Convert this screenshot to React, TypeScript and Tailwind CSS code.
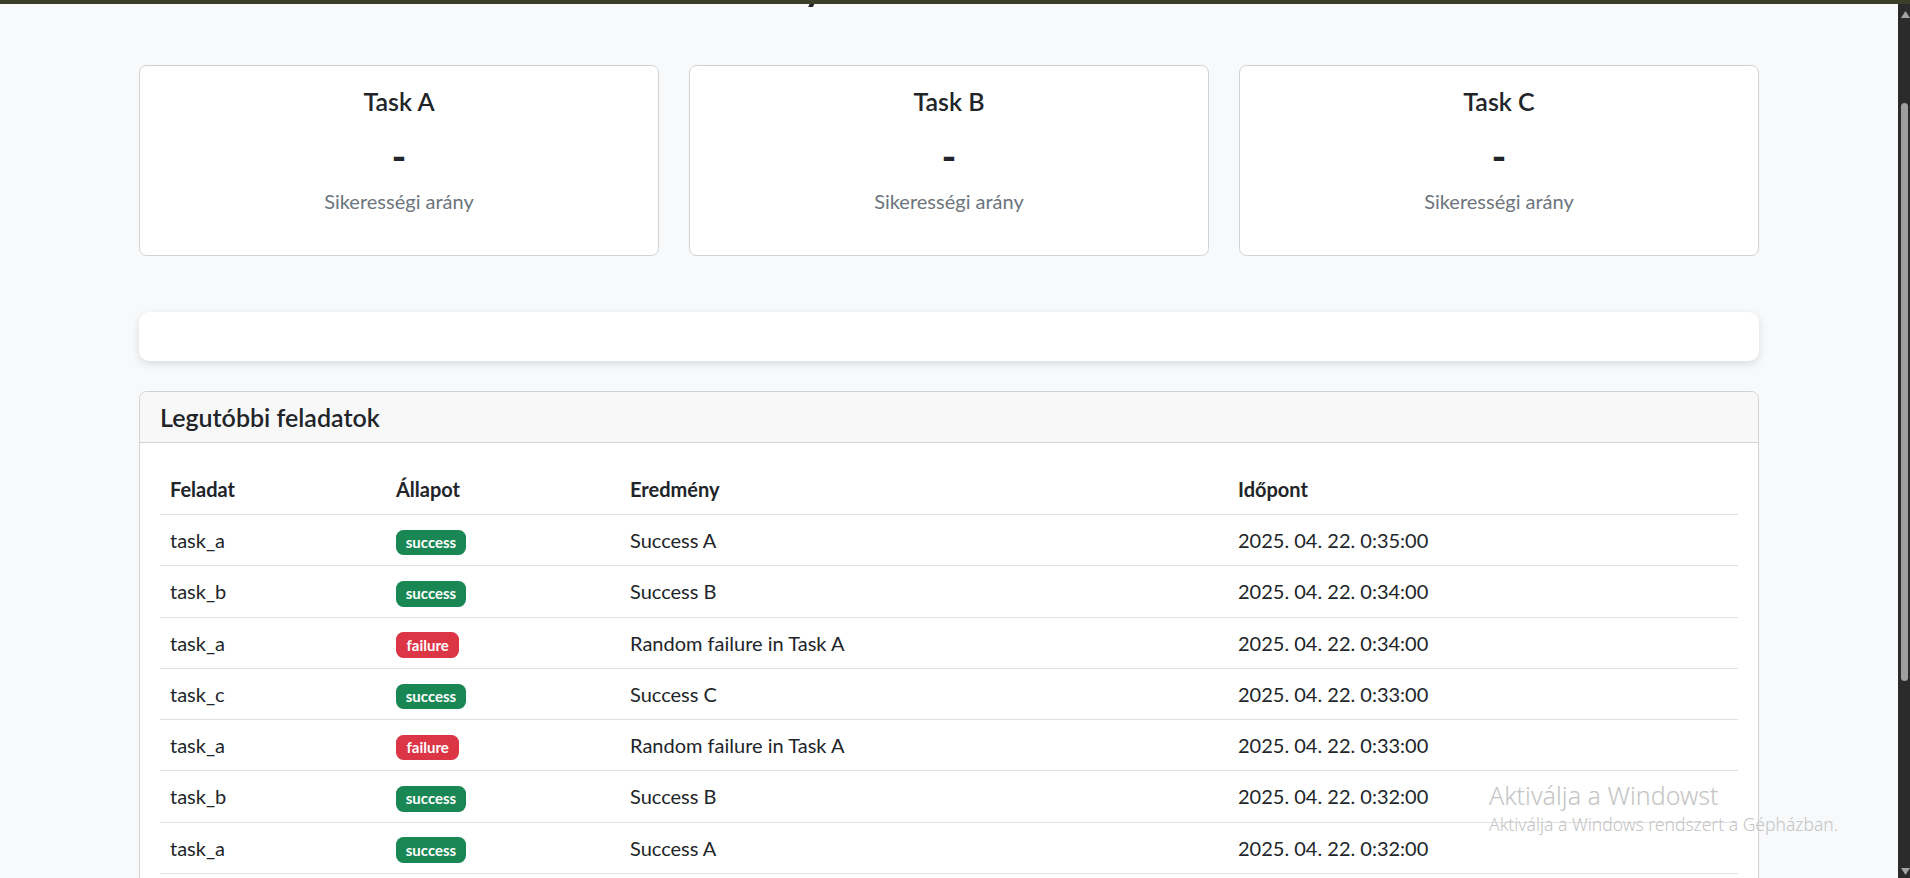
import React from "react";

type Row = { task: string; status: "success" | "failure"; result: string; time: string };

const rows: Row[] = [
  { task: "task_a", status: "success", result: "Success A", time: "2025. 04. 22. 0:35:00" },
  { task: "task_b", status: "success", result: "Success B", time: "2025. 04. 22. 0:34:00" },
  { task: "task_a", status: "failure", result: "Random failure in Task A", time: "2025. 04. 22. 0:34:00" },
  { task: "task_c", status: "success", result: "Success C", time: "2025. 04. 22. 0:33:00" },
  { task: "task_a", status: "failure", result: "Random failure in Task A", time: "2025. 04. 22. 0:33:00" },
  { task: "task_b", status: "success", result: "Success B", time: "2025. 04. 22. 0:32:00" },
  { task: "task_a", status: "success", result: "Success A", time: "2025. 04. 22. 0:32:00" },
  { task: "task_c", status: "success", result: "Success C", time: "2025. 04. 22. 0:31:00" },
  { task: "task_b", status: "success", result: "Success B", time: "2025. 04. 22. 0:31:00" },
];

function StatCard({ title }: { title: string }) {
  return (
    <div className="bg-white border border-[#d1d2d3] rounded-[7.5px] text-center p-[20px]">
      <h5 className="text-[25px] leading-[30px] font-semibold text-[#212529] mb-[10px]">{title}</h5>
      <h2 className="text-[40px] leading-[48px] font-bold text-[#212529] pt-[6px] mb-[6px]">-</h2>
      <p className="text-[20px] leading-[30px] text-[#6c757d] mb-[19px]">Sikerességi arány</p>
    </div>
  );
}

function Badge({ status }: { status: Row["status"] }) {
  const cls =
    status === "success"
      ? "inline-block bg-[#198754] text-white text-[15px] font-bold leading-none px-[9.75px] py-[5.25px] rounded-[7.5px] align-baseline"
      : "inline-block bg-[#dc3545] text-white text-[15px] font-bold leading-none px-[10.5px] py-[5.25px] rounded-[7.5px] align-baseline";
  return <span className={cls}>{status}</span>;
}

export default function App() {
  return (
    <div
      className="relative w-[1910px] h-[878px] overflow-hidden flex flex-col bg-[#f8f9fa] text-[#212529]"
      style={{ fontFamily: '"Lato", "Noto Sans", sans-serif' }}
    >
      <div className="h-[4px] shrink-0 bg-[#3b3f28]" />
      <div className="flex flex-1 min-h-0">
        <main className="flex-1 min-w-0 overflow-hidden">
          <h1 className="text-[50px] leading-[60px] font-medium text-center mt-[-55px] mb-[56px] pr-[26px]">
            Celery Task Dashboard
          </h1>
          <div className="w-[1620px] mx-auto">
            <div className="grid grid-cols-3 gap-[30px]">
              <StatCard title="Task A" />
              <StatCard title="Task B" />
              <StatCard title="Task C" />
            </div>

            <div className="mt-[56px] h-[49px] bg-white rounded-[10px] shadow-[0_3px_8px_rgba(0,0,0,0.12)]" />

            <div className="mt-[30px] bg-white border border-[#d1d2d3] rounded-[7.5px]">
              <div className="bg-[#f8f8f8] border-b border-[#d1d2d3] rounded-t-[7.5px] px-[20px] py-[10px]">
                <h5 className="text-[25px] leading-[30px] font-semibold">Legutóbbi feladatok</h5>
              </div>
              <div className="px-[20px] pt-[21px] pb-[20px]">
                <table className="w-full border-collapse text-[20px] leading-[30px]">
                  <thead>
                    <tr className="border-b border-[#dee2e6]">
                      <th className="w-[226px] text-left font-bold px-[10px] py-[10px]">Feladat</th>
                      <th className="w-[234px] text-left font-bold px-[10px] py-[10px]">Állapot</th>
                      <th className="w-[608px] text-left font-bold px-[10px] py-[10px]">Eredmény</th>
                      <th className="text-left font-bold px-[10px] py-[10px]">Időpont</th>
                    </tr>
                  </thead>
                  <tbody>
                    {rows.map((r, i) => (
                      <tr key={i} className="border-b border-[#dee2e6]">
                        <td className="px-[10px] py-[10px]">{r.task}</td>
                        <td className="px-[10px] py-[10px]">
                          <Badge status={r.status} />
                        </td>
                        <td className="px-[10px] py-[10px]">{r.result}</td>
                        <td className="px-[10px] py-[10px]">{r.time}</td>
                      </tr>
                    ))}
                  </tbody>
                </table>
              </div>
            </div>
          </div>
        </main>

        <div className="w-[12px] shrink-0 bg-[#2b2b2b] flex flex-col items-center">
          <svg width="9" height="7" viewBox="0 0 9 7" className="mt-[7px] ml-[2px]">
            <polygon points="4.5,0 9,7 0,7" fill="#a3a3a3" />
          </svg>
          <div className="mt-[85px] ml-[1px] w-[7px] h-[578px] rounded-[4px] bg-[#9e9e9e]" />
          <div className="flex-1" />
          <svg width="9" height="7" viewBox="0 0 9 7" className="mb-[3px] ml-[2px]">
            <polygon points="0,0 9,0 4.5,7" fill="#a3a3a3" />
          </svg>
        </div>
      </div>

      <div
        className="absolute left-[1489px] top-[778px] text-[#c4c4c4] pointer-events-none"
        style={{ fontFamily: '"Noto Sans", "Open Sans", sans-serif' }}
      >
        <div className="text-[25px] leading-[34px] font-light">Aktiválja a Windowst</div>
        <div className="text-[17.5px] leading-[24px] font-light">Aktiválja a Windows rendszert a Gépházban.</div>
      </div>
    </div>
  );
}
